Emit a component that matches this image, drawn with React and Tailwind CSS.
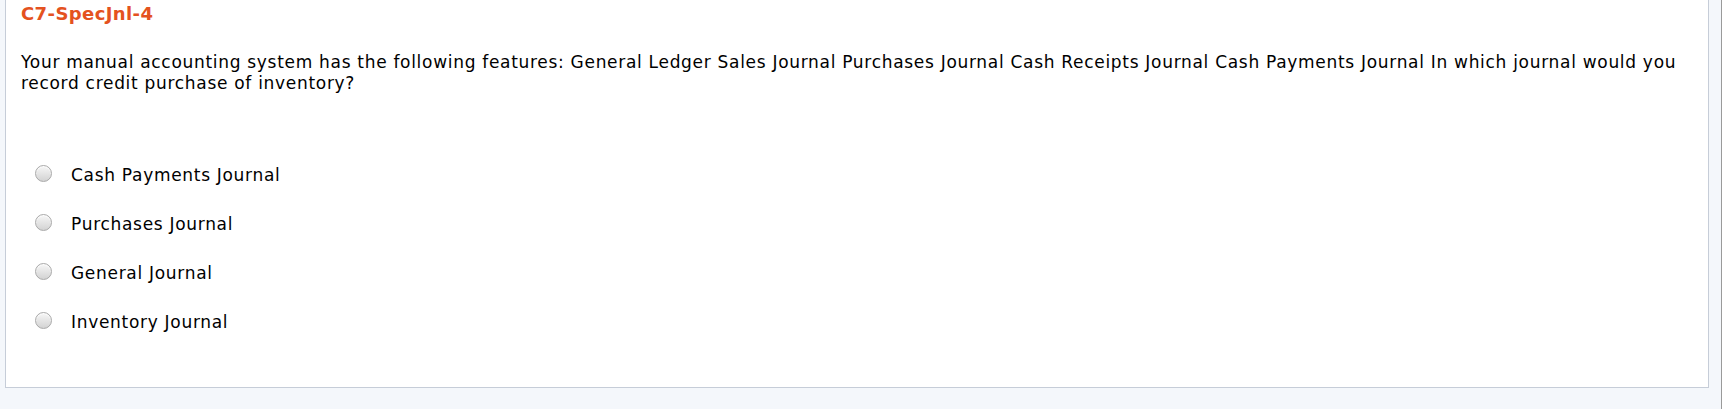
const OPTIONS = [
  'Cash Payments Journal',
  'Purchases Journal',
  'General Journal',
  'Inventory Journal'
]

function Radio() {
  return (
    <span className="block h-[17px] w-[17px] shrink-0 rounded-full border border-[#a9a9a9] bg-gradient-to-b from-[#f7f7f7] to-[#d3d3d3] shadow-[inset_0_1px_1px_rgba(255,255,255,0.9)]" />
  )
}

export default function App() {
  return (
    <div className="flex h-[409px] w-[1722px] bg-[#f4f7fb] font-['DejaVu_Sans',Verdana,sans-serif] text-black">
      <div className="flex-1">
        <div className="ml-[5px] w-[1704px] h-[388px] border-x border-b border-[#c6cdd8] bg-white pl-[15px] pr-[20px]">
          <h1 className="pt-[3px] text-[18px] leading-[22px] font-bold tracking-[0.4px] text-[#e4521f]">C7-SpecJnl-4</h1>

          <p className="mt-[27px] text-[17px] leading-[21px] tracking-[0.7px]">
            Your manual accounting system has the following features: General Ledger Sales Journal Purchases Journal Cash Receipts Journal Cash Payments Journal In which journal would you record credit purchase of inventory?
          </p>

          <div className="mt-[71px] flex flex-col gap-[28px] pl-[14px]">
            {OPTIONS.map(opt => (
              <label key={opt} className="flex h-[21px] items-start gap-[19px] text-[17px] leading-[21px] tracking-[0.7px]">
                <Radio />
                <span>{opt}</span>
              </label>
            ))}
          </div>
        </div>
      </div>
      <div className="w-px bg-[#9a9a9a]" />
    </div>
  )
}
